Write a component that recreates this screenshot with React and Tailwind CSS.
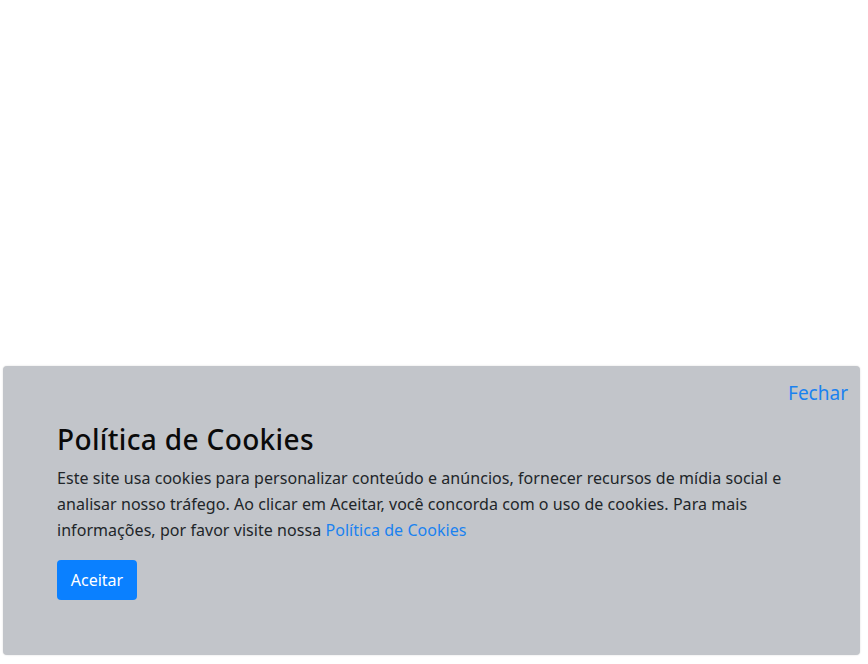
export default function App() {
  return (
    <div className="w-[868px] h-[664px] bg-white overflow-hidden" style={{ fontFamily: '"Noto Sans", "Open Sans", sans-serif' }}>
      <div className="ml-[3px] mt-[366px] w-[857px] h-[289px] bg-[#c2c5ca] rounded-[4px] shadow-[0_0_2px_rgba(0,0,0,0.15)] flex flex-col">
        <div className="flex justify-end pr-[12px] pt-[13px]">
          <span className="text-[19px] leading-[28px] text-[#1a82f0]">Fechar</span>
        </div>
        <div className="pl-[54px] pt-[15px]">
          <h3 className="text-[28px] leading-[34px] font-medium tracking-[0.35px] text-[#0a0a0a] mb-[9px]">Política de Cookies</h3>
          <p className="text-[16px] leading-[26px] tracking-[0.05px] text-[#212529]">
            Este site usa cookies para personalizar conteúdo e anúncios, fornecer recursos de mídia social e<br />
            analisar nosso tráfego. Ao clicar em Aceitar, você concorda com o uso de cookies. Para mais<br />
            informações, por favor visite nossa <span className="text-[#1a82f0]">Política de Cookies</span>
          </p>
          <button className="mt-[17px] w-[80px] h-[40px] rounded-[4px] bg-[#0a80ff] text-white text-[16px] flex items-center justify-center">Aceitar</button>
        </div>
      </div>
    </div>
  );
}
